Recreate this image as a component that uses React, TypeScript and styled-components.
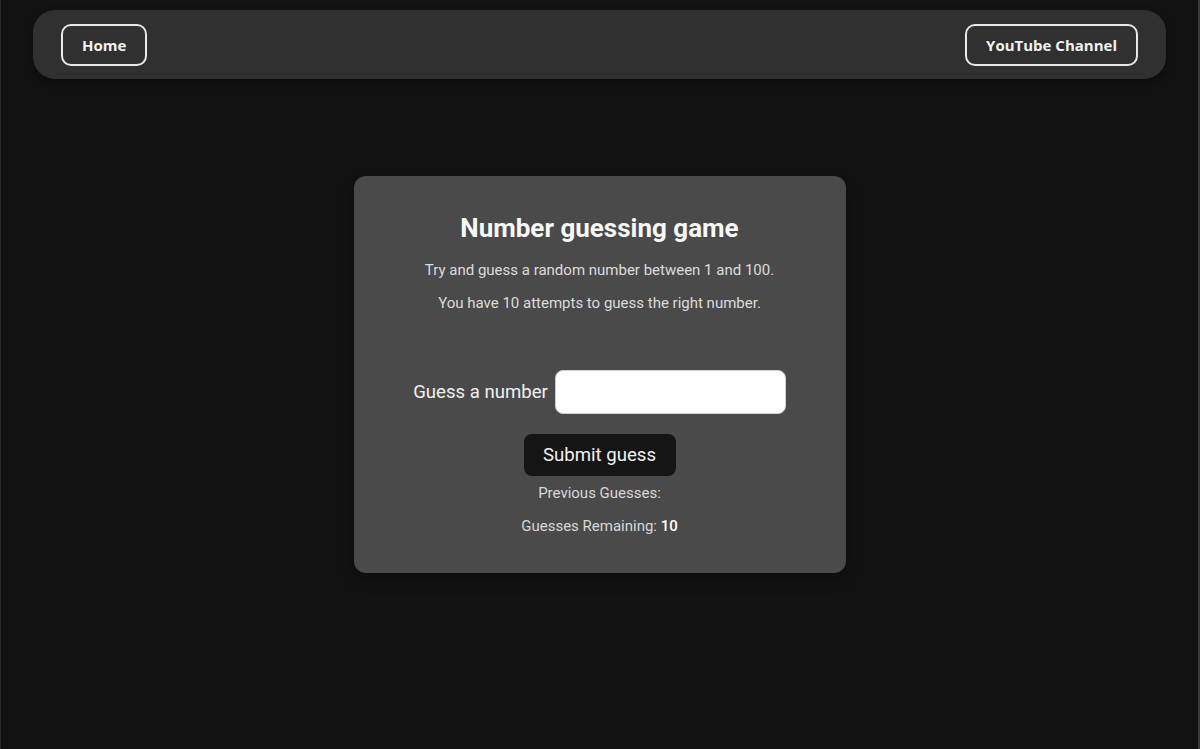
import React from "react";
import styled, { createGlobalStyle } from "styled-components";

const Global = createGlobalStyle`
  html, body { margin: 0; padding: 0; background: #121212; }
  body { font-family: Roboto, "Liberation Sans", sans-serif; color: #eee; }
  * { box-sizing: border-box; }
`;

const Page = styled.div`
  min-height: 749px;
  padding: 10px 32px 0 32px;
  background: #121212;
  border-left: 1px solid #2a2a2a;
  border-right: 2px solid #3a3a3a;
`;

const NavBar = styled.nav`
  height: 69px;
  background: #303030;
  border-radius: 22px;
  display: flex;
  align-items: center;
  justify-content: space-between;
  padding: 0 28px;
  box-shadow: 0 4px 10px rgba(0, 0, 0, 0.35);
`;

const NavButton = styled.a`
  display: inline-flex;
  align-items: center;
  justify-content: center;
  height: 42px;
  padding: 0 19px;
  border: 2px solid #e8e8e8;
  border-radius: 10px;
  color: #f2f2f2;
  font-family: "Open Sans", sans-serif;
  font-weight: 700;
  font-size: 15px;
  text-decoration: none;
`;

const Main = styled.main`
  display: flex;
  justify-content: center;
  padding-top: 97px;
`;

const Card = styled.section`
  width: 492px;
  height: 397px;
  background: #4a4a4a;
  border-radius: 12px;
  padding: 37px 30px 37px;
  display: flex;
  flex-direction: column;
  align-items: center;
  box-shadow: 0 6px 16px rgba(0, 0, 0, 0.3);
`;

const Title = styled.h1`
  margin: 0;
  font-size: 26px;
  line-height: 30px;
  font-weight: 700;
  color: #f7f7f7;
`;

const Info = styled.p<{ $top: number }>`
  margin: ${(p) => p.$top}px 0 0;
  font-size: 15px;
  line-height: 20px;
  color: #dcdcdc;
`;

const FormRow = styled.div`
  margin-top: 57px;
  display: flex;
  align-items: center;
  gap: 7px;
`;

const Label = styled.label`
  font-size: 18.6px;
  color: #f0f0f0;
`;

const Input = styled.input`
  width: 231px;
  height: 44px;
  border: 1px solid #cfcfcf;
  border-radius: 8px;
  background: #fff;
  font-size: 18px;
  padding: 0 10px;
  outline: none;
`;

const Submit = styled.button`
  margin-top: 20px;
  width: 152px;
  height: 42px;
  border: none;
  border-radius: 8px;
  background: #151515;
  color: #f2f2f2;
  font-family: Roboto, sans-serif;
  font-size: 18.6px;
  cursor: pointer;
`;

const Stat = styled.p<{ $top: number }>`
  margin: ${(p) => p.$top}px 0 0;
  font-size: 15px;
  line-height: 20px;
  color: #d8d8d8;
`;

const Strong = styled.span`
  color: #fff;
  font-weight: 500;
`;

export default function App() {
  return (
    <>
      <Global />
      <Page>
        <NavBar>
          <NavButton href="#">Home</NavButton>
          <NavButton href="#">YouTube Channel</NavButton>
        </NavBar>
        <Main>
          <Card>
            <Title>Number guessing game</Title>
            <Info $top={17}>Try and guess a random number between 1 and 100.</Info>
            <Info $top={13}>You have 10 attempts to guess the right number.</Info>
            <FormRow>
              <Label htmlFor="guess">Guess a number</Label>
              <Input id="guess" type="text" />
            </FormRow>
            <Submit>Submit guess</Submit>
            <Stat $top={7}>Previous Guesses:</Stat>
            <Stat $top={13}>
              Guesses Remaining: <Strong>10</Strong>
            </Stat>
          </Card>
        </Main>
      </Page>
    </>
  );
}
